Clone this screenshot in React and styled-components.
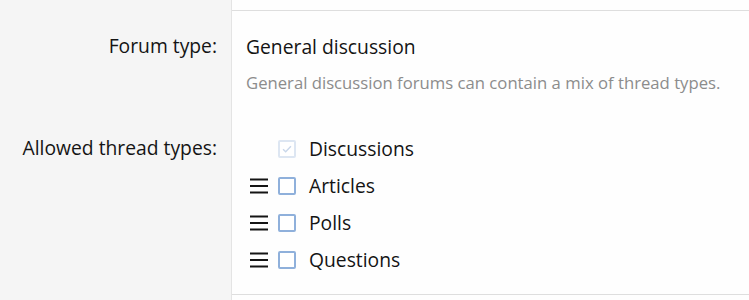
import React from 'react';
import styled, { createGlobalStyle } from 'styled-components';

const GlobalStyle = createGlobalStyle`
  html, body {
    margin: 0;
    padding: 0;
    background: #ffffff;
  }
  body {
    font-family: 'Open Sans', 'Noto Sans', sans-serif;
    color: #141414;
  }
`;

const threadTypes = [
  { id: 'discussion', label: 'Discussions', locked: true, checked: true },
  { id: 'article', label: 'Articles' },
  { id: 'poll', label: 'Polls' },
  { id: 'question', label: 'Questions' },
];

function DragHandle() {
  return (
    <Handle viewBox="0 0 18 16" aria-hidden="true">
      <path d="M0 1.5h18M0 8h18M0 14.5h18" stroke="#141414" strokeWidth="2.2" />
    </Handle>
  );
}

function CheckBox({ checked, disabled }) {
  return (
    <Box $disabled={disabled}>
      {checked && (
        <svg viewBox="0 0 16 16" width="14" height="14" aria-hidden="true">
          <path d="M3.5 8.2l3 3 6-6.4" fill="none" stroke="#c9d7ea" strokeWidth="1.6" />
        </svg>
      )}
    </Box>
  );
}

export default function App() {
  return (
    <>
      <GlobalStyle />
      <Form>
        <Row>
          <Label />
          <Value $stub />
        </Row>
        <Row>
          <Label>
            <Term>Forum type:</Term>
            <Term>Allowed thread types:</Term>
          </Label>
          <Value $bordered>
            <Field>
              <Main>General discussion</Main>
              <Explain>General discussion forums can contain a mix of thread types.</Explain>
            </Field>
            <TypeList>
              {threadTypes.map((t) => (
                <TypeItem key={t.id}>
                  <HandleSlot>{!t.locked && <DragHandle />}</HandleSlot>
                  <CheckBox checked={t.checked} disabled={t.locked} />
                  <TypeName>{t.label}</TypeName>
                </TypeItem>
              ))}
            </TypeList>
          </Value>
        </Row>
        <Row>
          <Label />
          <Value $stub />
        </Row>
      </Form>
    </>
  );
}

const Form = styled.div`
  display: flex;
  flex-direction: column;
  width: 749px;
  height: 300px;
  overflow: hidden;
`;

const Row = styled.div`
  display: grid;
  grid-template-columns: 232px 1fr;
`;

const Label = styled.div`
  background: #f5f5f5;
  border-right: 1px solid #e4e4e4;
  display: flex;
  flex-direction: column;
  align-items: flex-end;
  padding-right: 14px;
`;

const Term = styled.div`
  font-size: 19.3px;
  line-height: 26px;
  &:first-child {
    margin-top: 23px;
  }
  &:last-child {
    margin-top: 76px;
  }
`;

const Value = styled.div`
  background: #fefefe;
  height: ${(p) => (p.$stub ? '10px' : 'auto')};
  border-top: ${(p) => (p.$bordered ? '1px solid #dedede' : 'none')};
  border-bottom: ${(p) => (p.$bordered ? '1px solid #dedede' : 'none')};
  padding: ${(p) => (p.$bordered ? '23px 14px 21px 14px' : '0')};
`;

const Field = styled.div`
  display: flex;
  flex-direction: column;
  gap: 12px;
`;

const Main = styled.div`
  font-size: 19.3px;
  line-height: 26px;
`;

const Explain = styled.div`
  font-size: 16.7px;
  line-height: 22px;
  color: #8c8c8c;
`;

const TypeList = styled.ul`
  list-style: none;
  margin: 42px 0 0 0;
  padding: 0;
  display: flex;
  flex-direction: column;
  gap: 11px;
`;

const TypeItem = styled.li`
  display: flex;
  align-items: center;
  height: 26px;
`;

const HandleSlot = styled.span`
  width: 28px;
  display: flex;
  align-items: center;
  padding-left: 4px;
`;

const Handle = styled.svg`
  width: 18px;
  height: 16px;
`;

const Box = styled.span`
  width: 18px;
  height: 18px;
  box-sizing: border-box;
  border: 2px solid ${(p) => (p.$disabled ? '#dde6f2' : '#8fb0db')};
  border-radius: 2px;
  background: #ffffff;
  display: flex;
  align-items: center;
  justify-content: center;
  margin-right: 13px;
`;

const TypeName = styled.span`
  font-size: 19.3px;
  line-height: 26px;
`;
